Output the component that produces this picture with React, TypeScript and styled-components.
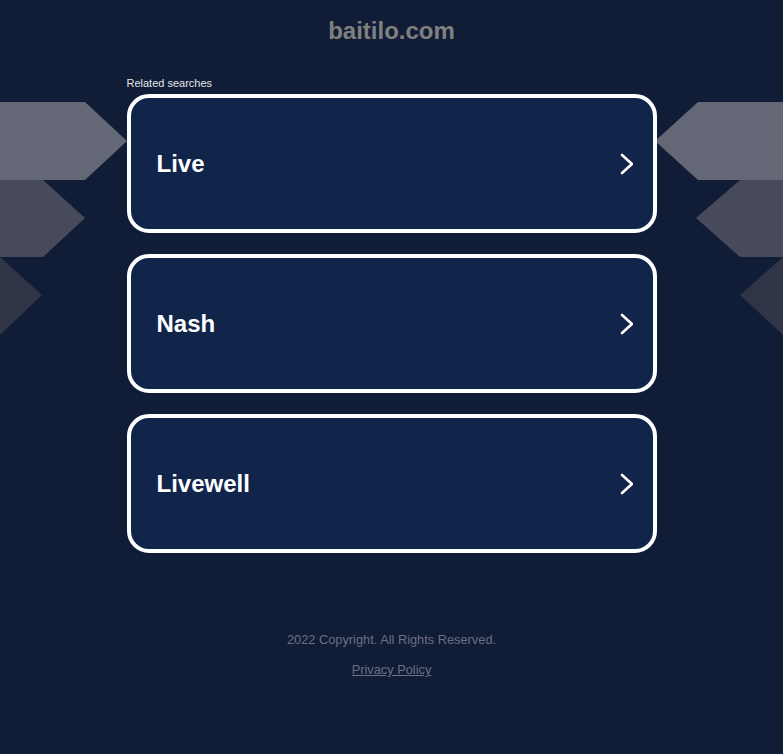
import React from "react";
import styled, { createGlobalStyle } from "styled-components";

const Global = createGlobalStyle`
  html, body {
    margin: 0;
    padding: 0;
    background: #111c36;
    font-family: "Liberation Sans", Arial, sans-serif;
  }
`;

const Page = styled.div`
  position: relative;
  min-height: 754px;
  overflow: hidden;
  display: flex;
  flex-direction: column;
  align-items: center;
`;

const Decor = styled.svg<{ $side: "left" | "right" }>`
  position: absolute;
  top: 102px;
  ${(p) => (p.$side === "left" ? "left: 0;" : "right: 0;")}
  width: 128px;
  height: 234px;
  z-index: 0;
  pointer-events: none;
`;

const Title = styled.h1`
  margin: 0;
  padding-top: 17px;
  font-size: 24px;
  line-height: 28px;
  font-weight: bold;
  color: #808080;
  position: relative;
  z-index: 1;
`;

const Column = styled.main`
  position: relative;
  z-index: 1;
  width: 530px;
  margin-top: 32px;
  display: flex;
  flex-direction: column;
`;

const Label = styled.div`
  font-size: 11px;
  line-height: 13px;
  color: #e3e6ec;
  margin-bottom: 4px;
`;

const List = styled.div`
  display: flex;
  flex-direction: column;
  gap: 21px;
`;

const Card = styled.a`
  box-sizing: border-box;
  height: 139px;
  border: 4px solid #ffffff;
  border-radius: 22px;
  background: #11254b;
  display: flex;
  align-items: center;
  justify-content: space-between;
  padding: 0 20px 0 26px;
  text-decoration: none;
  color: #ffffff;
`;

const CardText = styled.span`
  font-size: 24px;
  font-weight: bold;
  line-height: 28px;
`;

const Footer = styled.footer`
  margin-top: 79px;
  display: flex;
  flex-direction: column;
  align-items: center;
  gap: 15px;
  font-size: 12.8px;
  line-height: 15px;
  color: #6b7184;
`;

const FooterLink = styled.a`
  color: #6b7184;
  text-decoration: underline;
`;

const Chevron = () => (
  <svg width="14" height="22" viewBox="0 0 14 22">
    <polyline
      points="3,2 13,11 3,20"
      fill="none"
      stroke="#ffffff"
      strokeWidth="2.6"
      strokeLinecap="round"
      strokeLinejoin="round"
    />
  </svg>
);

const items = ["Live", "Nash", "Livewell"];

export default function App() {
  return (
    <>
      <Global />
      <Page>
        <Decor $side="left" viewBox="0 0 128 234">
          <polygon points="0,0 85,0 127,39 85,78 0,78" fill="#646776" />
          <polygon points="0,78 43,78 85,116 43,155 0,155" fill="#474a5a" />
          <polygon points="0,155 42,193 0,233" fill="#2f3446" />
        </Decor>
        <Decor $side="right" viewBox="0 0 128 234">
          <polygon points="128,0 43,0 0,39 43,78 128,78" fill="#646776" />
          <polygon points="128,78 85,78 41,116 85,155 128,155" fill="#474a5a" />
          <polygon points="128,155 85,193 128,233" fill="#2f3446" />
        </Decor>
        <Title>baitilo.com</Title>
        <Column>
          <Label>Related searches</Label>
          <List>
            {items.map((t) => (
              <Card key={t} href="#">
                <CardText>{t}</CardText>
                <Chevron />
              </Card>
            ))}
          </List>
        </Column>
        <Footer>
          <span>2022 Copyright. All Rights Reserved.</span>
          <FooterLink href="#">Privacy Policy</FooterLink>
        </Footer>
      </Page>
    </>
  );
}
